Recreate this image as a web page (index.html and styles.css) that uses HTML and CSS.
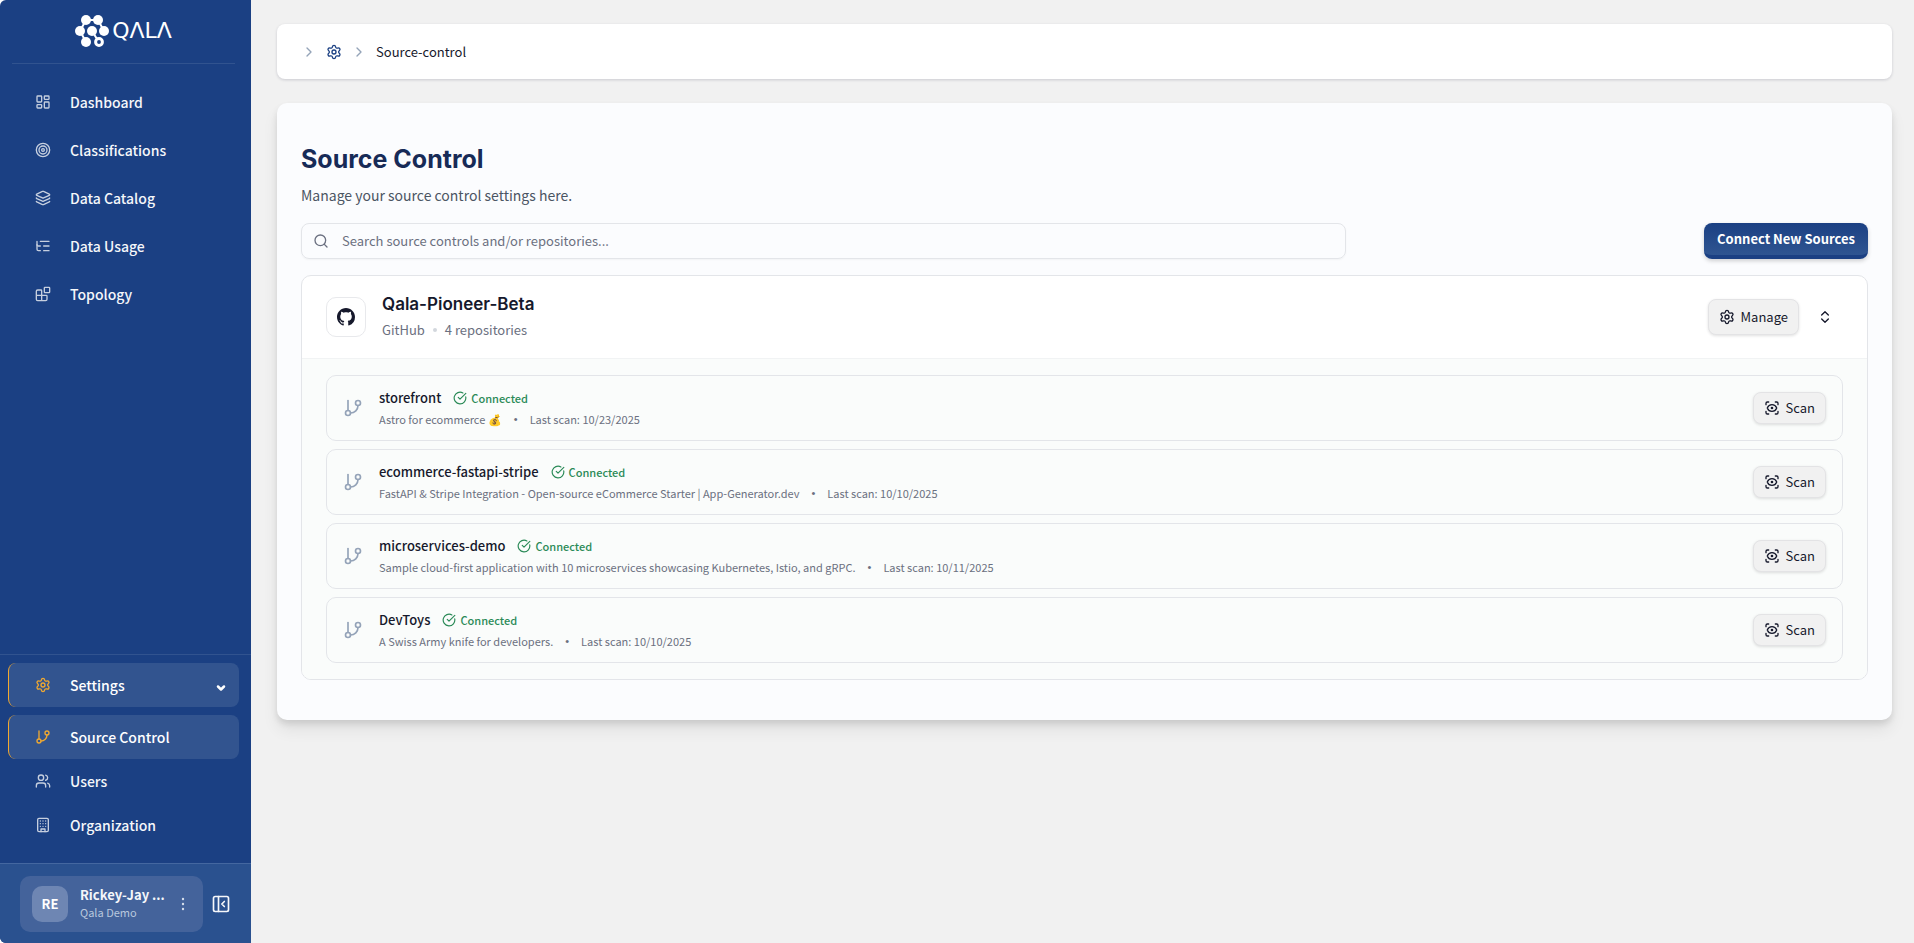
FILE: index.html
```html
<!DOCTYPE html>
<html lang="en">
<head>
  <meta charset="UTF-8">
  <meta name="viewport" content="width=device-width, initial-scale=1">
  <title>Source Control | Qala</title>
  <link rel="stylesheet" href="styles.css">
</head>
<body>
  <!-- Icon sprite -->
  <svg class="sprite" aria-hidden="true">
    <symbol id="i-dashboard" viewBox="0 0 24 24"><rect width="7" height="9" x="3" y="3" rx="1"/><rect width="7" height="5" x="14" y="3" rx="1"/><rect width="7" height="9" x="14" y="12" rx="1"/><rect width="7" height="5" x="3" y="16" rx="1"/></symbol>
    <symbol id="i-target" viewBox="0 0 24 24"><circle cx="12" cy="12" r="10"/><circle cx="12" cy="12" r="6"/><circle cx="12" cy="12" r="2"/></symbol>
    <symbol id="i-layers" viewBox="0 0 24 24"><path d="M12.83 2.18a2 2 0 0 0-1.66 0L2.6 6.08a1 1 0 0 0 0 1.83l8.58 3.91a2 2 0 0 0 1.66 0l8.58-3.9a1 1 0 0 0 0-1.83z"/><path d="M2 12a1 1 0 0 0 .58.91l8.6 3.91a2 2 0 0 0 1.65 0l8.58-3.9A1 1 0 0 0 22 12"/><path d="M2 17a1 1 0 0 0 .58.91l8.6 3.91a2 2 0 0 0 1.65 0l8.58-3.9A1 1 0 0 0 22 17"/></symbol>
    <symbol id="i-tree" viewBox="0 0 24 24"><path d="M21 12h-8"/><path d="M21 5H8"/><path d="M21 19h-8"/><path d="M3 5v5c0 1.1.9 2 2 2h3"/><path d="M3 10v7c0 1.1.9 2 2 2h3"/></symbol>
    <symbol id="i-blocks" viewBox="0 0 24 24"><rect width="8" height="8" x="14" y="2" rx="1"/><path d="M10 22V7a1 1 0 0 0-1-1H4a2 2 0 0 0-2 2v12a2 2 0 0 0 2 2h12a2 2 0 0 0 2-2v-5a1 1 0 0 0-1-1H2"/></symbol>
    <symbol id="i-settings" viewBox="0 0 24 24"><path d="M9.671 4.136a2.34 2.34 0 0 1 4.659 0 2.34 2.34 0 0 0 3.319 1.915 2.34 2.34 0 0 1 2.33 4.033 2.34 2.34 0 0 0 0 3.831 2.34 2.34 0 0 1-2.33 4.033 2.34 2.34 0 0 0-3.319 1.915 2.34 2.34 0 0 1-4.659 0 2.34 2.34 0 0 0-3.32-1.915 2.34 2.34 0 0 1-2.33-4.033 2.34 2.34 0 0 0 0-3.831A2.34 2.34 0 0 1 6.35 6.051a2.34 2.34 0 0 0 3.319-1.915"/><circle cx="12" cy="12" r="3"/></symbol>
    <symbol id="i-branch" viewBox="0 0 24 24"><path d="M6 3v12"/><circle cx="18" cy="6" r="3"/><circle cx="6" cy="18" r="3"/><path d="M18 9a9 9 0 0 1-9 9"/></symbol>
    <symbol id="i-users" viewBox="0 0 24 24"><path d="M16 21v-2a4 4 0 0 0-4-4H6a4 4 0 0 0-4 4v2"/><circle cx="9" cy="7" r="4"/><path d="M22 21v-2a4 4 0 0 0-3-3.87"/><path d="M16 3.13a4 4 0 0 1 0 7.75"/></symbol>
    <symbol id="i-building" viewBox="0 0 24 24"><rect width="16" height="20" x="4" y="2" rx="2"/><path d="M9 22v-4h6v4M8 6h.01M16 6h.01M12 6h.01M12 10h.01M12 14h.01M16 10h.01M16 14h.01M8 10h.01M8 14h.01"/></symbol>
    <symbol id="i-panel" viewBox="0 0 24 24"><rect width="18" height="18" x="3" y="3" rx="2"/><path d="M9 3v18"/><path d="m16 15-3-3 3-3"/></symbol>
    <symbol id="i-right" viewBox="0 0 24 24"><path d="m9 18 6-6-6-6"/></symbol>
    <symbol id="i-down" viewBox="0 0 24 24"><path d="m6 9 6 6 6-6"/></symbol>
    <symbol id="i-updown" viewBox="0 0 24 24"><path d="m7 15 5 5 5-5"/><path d="m7 9 5-5 5 5"/></symbol>
    <symbol id="i-search" viewBox="0 0 24 24"><circle cx="11" cy="11" r="8"/><path d="m21 21-4.3-4.3"/></symbol>
    <symbol id="i-check" viewBox="0 0 24 24"><path d="M21.801 10A10 10 0 1 1 17 3.335"/><path d="m9 11 3 3L22 4"/></symbol>
    <symbol id="i-scan" viewBox="0 0 24 24"><path d="M3 7V5a2 2 0 0 1 2-2h2"/><path d="M17 3h2a2 2 0 0 1 2 2v2"/><path d="M21 17v2a2 2 0 0 1-2 2h-2"/><path d="M7 21H5a2 2 0 0 1-2-2v-2"/><circle cx="12" cy="12" r="1"/><path d="M18.944 12.33a1 1 0 0 0 0-.66 7.5 7.5 0 0 0-13.888 0 1 1 0 0 0 0 .66 7.5 7.5 0 0 0 13.888 0"/></symbol>
    <symbol id="i-github" viewBox="0 0 16 16"><path d="M8 0C3.58 0 0 3.58 0 8c0 3.54 2.29 6.53 5.47 7.59.4.07.55-.17.55-.38 0-.19-.01-.82-.01-1.49-2.01.37-2.53-.49-2.69-.94-.09-.23-.48-.94-.82-1.13-.28-.15-.68-.52-.01-.53.63-.01 1.08.58 1.23.82.72 1.21 1.87.87 2.33.66.07-.52.28-.87.51-1.07-1.78-.2-3.64-.89-3.64-3.95 0-.87.31-1.59.82-2.15-.08-.2-.36-1.02.08-2.12 0 0 .67-.21 2.2.82.64-.18 1.32-.27 2-.27s1.36.09 2 .27c1.53-1.04 2.2-.82 2.2-.82.44 1.1.16 1.92.08 2.12.51.56.82 1.27.82 2.15 0 3.07-1.87 3.75-3.65 3.95.29.25.54.73.54 1.48 0 1.07-.01 1.93-.01 2.2 0 .21.15.46.55.38A8.01 8.01 0 0 0 16 8c0-4.42-3.58-8-8-8z"/></symbol>
  </svg>

  <div class="app">
    <aside class="sidebar">
      <a class="logo" href="#" aria-label="Qala">
        <svg class="logo-mark" viewBox="0 0 34 32">
          <path d="M11 5h12M11 5 5 16M23 5l6 11M5 16l6 11M17 16l5 8"/>
          <g class="dots"><circle cx="11" cy="5" r="5"/><circle cx="23" cy="5" r="5"/><circle cx="5" cy="16" r="5"/><circle cx="17" cy="16" r="5"/><circle cx="29" cy="16" r="5"/><circle cx="11" cy="27" r="5"/></g>
          <circle class="ring" cx="24" cy="27" r="3.4"/>
        </svg>
        <span class="logo-word">QΛLΛ</span>
      </a>

      <nav class="nav">
        <a class="nav-item" href="#"><svg class="icon"><use href="#i-dashboard"/></svg>Dashboard</a>
        <a class="nav-item" href="#"><svg class="icon"><use href="#i-target"/></svg>Classifications</a>
        <a class="nav-item" href="#"><svg class="icon"><use href="#i-layers"/></svg>Data Catalog</a>
        <a class="nav-item" href="#"><svg class="icon"><use href="#i-tree"/></svg>Data Usage</a>
        <a class="nav-item" href="#"><svg class="icon"><use href="#i-blocks"/></svg>Topology</a>
      </nav>

      <nav class="nav-bottom">
        <button class="nav-item active toggle" type="button"><svg class="icon"><use href="#i-settings"/></svg>Settings<svg class="icon caret"><use href="#i-down"/></svg></button>
        <a class="nav-item active" href="#"><svg class="icon"><use href="#i-branch"/></svg>Source Control</a>
        <a class="nav-item" href="#"><svg class="icon"><use href="#i-users"/></svg>Users</a>
        <a class="nav-item" href="#"><svg class="icon"><use href="#i-building"/></svg>Organization</a>
      </nav>

      <div class="account">
        <button class="user" type="button">
          <span class="avatar">RE</span>
          <span class="user-text">
            <span class="user-name">Rickey-Jay ...</span>
            <span class="user-org">Qala Demo</span>
          </span>
          <svg class="more" viewBox="0 0 4 14" aria-hidden="true"><circle cx="2" cy="2" r="1.2"/><circle cx="2" cy="7" r="1.2"/><circle cx="2" cy="12" r="1.2"/></svg>
        </button>
        <button class="collapse" type="button" aria-label="Collapse sidebar"><svg class="icon"><use href="#i-panel"/></svg></button>
      </div>
    </aside>

    <main class="main">
      <nav class="breadcrumb" aria-label="Breadcrumb">
        <svg class="icon sep"><use href="#i-right"/></svg>
        <a class="crumb-home" href="#" aria-label="Settings"><svg class="icon"><use href="#i-settings"/></svg></a>
        <svg class="icon sep"><use href="#i-right"/></svg>
        <span>Source-control</span>
      </nav>

      <section class="panel">
        <h1 class="title">Source Control</h1>
        <p class="subtitle">Manage your source control settings here.</p>

        <div class="toolbar">
          <label class="search">
            <svg class="icon"><use href="#i-search"/></svg>
            <input type="search" aria-label="Search" placeholder="Search source controls and/or repositories...">
          </label>
          <button class="btn-primary" type="button">Connect New Sources</button>
        </div>

        <div class="source">
          <header class="source-head">
            <span class="source-logo"><svg><use href="#i-github"/></svg></span>
            <div class="source-info">
              <h2>Qala-Pioneer-Beta</h2>
              <p>GitHub <i class="dot"></i> 4 repositories</p>
            </div>
            <button class="btn manage" type="button"><svg class="icon"><use href="#i-settings"/></svg>Manage</button>
            <button class="expand" type="button" aria-label="Toggle repositories"><svg class="icon"><use href="#i-updown"/></svg></button>
          </header>

          <ul class="repos">
            <li class="repo">
              <svg class="icon repo-icon"><use href="#i-branch"/></svg>
              <div class="repo-info">
                <div class="repo-top"><h3>storefront</h3><span class="status"><svg class="icon"><use href="#i-check"/></svg>Connected</span></div>
                <p class="meta"><span>Astro for ecommerce 💰</span><span class="bullet">•</span><span>Last scan: 10/23/2025</span></p>
              </div>
              <button class="btn" type="button"><svg class="icon"><use href="#i-scan"/></svg>Scan</button>
            </li>
            <li class="repo">
              <svg class="icon repo-icon"><use href="#i-branch"/></svg>
              <div class="repo-info">
                <div class="repo-top"><h3>ecommerce-fastapi-stripe</h3><span class="status"><svg class="icon"><use href="#i-check"/></svg>Connected</span></div>
                <p class="meta"><span>FastAPI &amp; Stripe Integration - Open-source eCommerce Starter | App-Generator.dev</span><span class="bullet">•</span><span>Last scan: 10/10/2025</span></p>
              </div>
              <button class="btn" type="button"><svg class="icon"><use href="#i-scan"/></svg>Scan</button>
            </li>
            <li class="repo">
              <svg class="icon repo-icon"><use href="#i-branch"/></svg>
              <div class="repo-info">
                <div class="repo-top"><h3>microservices-demo</h3><span class="status"><svg class="icon"><use href="#i-check"/></svg>Connected</span></div>
                <p class="meta"><span>Sample cloud-first application with 10 microservices showcasing Kubernetes, Istio, and gRPC.</span><span class="bullet">•</span><span>Last scan: 10/11/2025</span></p>
              </div>
              <button class="btn" type="button"><svg class="icon"><use href="#i-scan"/></svg>Scan</button>
            </li>
            <li class="repo">
              <svg class="icon repo-icon"><use href="#i-branch"/></svg>
              <div class="repo-info">
                <div class="repo-top"><h3>DevToys</h3><span class="status"><svg class="icon"><use href="#i-check"/></svg>Connected</span></div>
                <p class="meta"><span>A Swiss Army knife for developers.</span><span class="bullet">•</span><span>Last scan: 10/10/2025</span></p>
              </div>
              <button class="btn" type="button"><svg class="icon"><use href="#i-scan"/></svg>Scan</button>
            </li>
          </ul>
        </div>
      </section>
    </main>
  </div>
</body>
</html>
```
FILE: styles.css
```css
* { box-sizing: border-box; }
body { margin: 0; background: #fff; color: #16192c; font: 14px/20px "Noto Sans CJK SC", sans-serif; }
h1, h2, h3, p, ul { margin: 0; padding: 0; }
a { color: inherit; text-decoration: none; }
button { margin: 0; border: 0; background: none; color: inherit; font: inherit; cursor: pointer; }
.sprite { display: none; }
.icon { flex: none; width: 16px; height: 16px; fill: none; stroke: currentColor; stroke-width: 2; stroke-linecap: round; stroke-linejoin: round; }

.app { display: flex; min-height: 100vh; background: #f1f1f1; border-radius: 6px 0 0 6px; overflow: hidden; }

/* Sidebar */
.sidebar { display: flex; flex-direction: column; flex: none; width: 251px; background: #1b4083; color: #f5f7fa; }
.logo { display: flex; align-items: center; justify-content: center; gap: 3px; height: 64px; margin: 0 16px 0 12px; padding-bottom: 2px; border-bottom: 1px solid #31538f; color: #fff; }
.logo-mark { width: 34px; height: 32px; fill: none; stroke: #fff; stroke-width: 2; }
.logo-mark .dots { fill: #fff; stroke: none; }
.logo-mark .ring { stroke-width: 3; }
.logo-word { font: 22px/24px "DejaVu Sans", sans-serif; }
.nav { display: flex; flex-direction: column; gap: 4px; padding: 16px 12px 0 8px; }
.nav-bottom { display: flex; flex-direction: column; margin-top: auto; padding: 8px 12px 16px 8px; border-top: 1px solid #31538f; }
.nav-item { display: flex; align-items: center; gap: 19px; height: 44px; padding: 0 12px 0 26px; border-left: 1px solid transparent; border-radius: 8px; font-weight: 500; text-align: left; }
.nav-item .icon { color: #c6cfdf; }
.nav-item.active { background: #32548f; border-left-color: #f0a830; color: #fff; }
.nav-item.active .icon { color: #f0a830; }
.nav-item.toggle { margin-bottom: 8px; }
.nav-item .caret { width: 12px; height: 12px; margin: 6px 0 0 auto; stroke-width: 5; }
.nav-item.active .caret { color: #fff; }
.account { display: flex; align-items: center; gap: 8px; height: 80px; padding: 0 20px; border-top: 1px solid #4467a0; background: #2a518f; }
.user { display: flex; align-items: center; gap: 12px; width: 183px; height: 56px; padding: 0 18px 0 12px; border-radius: 10px; background: #44639b; text-align: left; }
.avatar { flex: none; width: 36px; height: 36px; border-radius: 10px; background: #6e86b3; color: #fff; font-size: 13px; font-weight: 700; line-height: 36px; text-align: center; }
.user-text { display: flex; flex-direction: column; flex: 1; padding-bottom: 2px; }
.user-name { font-size: 13px; font-weight: 700; line-height: 18px; white-space: nowrap; }
.user-org { color: #b9c8de; font-size: 11px; line-height: 16px; }
.more { flex: none; width: 4px; height: 14px; fill: #d5deeb; }
.collapse { display: flex; padding: 0; }
.collapse .icon { width: 20px; height: 20px; }

/* Main column */
.main { flex: 1; min-width: 0; padding: 24px 22px 24px 26px; }
.breadcrumb { display: flex; align-items: center; gap: 9px; height: 55px; margin-bottom: 24px; padding: 0 24px; border-radius: 8px; background: #fff; box-shadow: 0 1px 3px rgba(25, 30, 60, .18); font-size: 13px; }
.breadcrumb .sep { color: #94a3b8; }
.crumb-home { display: flex; color: #1b4083; }
.panel { padding: 36px 24px 40px; border-radius: 10px; background: #fbfcfe; box-shadow: 0 4px 6px rgba(0, 0, 0, .1), 0 10px 16px rgba(0, 0, 0, .07); }
.title { color: #172b57; font: 700 25px/40px Inter, sans-serif; }
.subtitle { margin-top: 4px; color: #4b5563; line-height: 24px; }
.toolbar { display: flex; align-items: center; justify-content: space-between; margin: 16px 0; }
.search { display: flex; align-items: center; gap: 13px; width: 66.7%; height: 36px; padding: 0 11px; border: 1px solid #e3e5e9; border-radius: 8px; color: #6b7080; box-shadow: 0 1px 2px rgba(0, 0, 0, .04); }
.search input { flex: 1; min-width: 0; padding: 0; border: 0; outline: 0; background: none; color: inherit; font: 13px/20px "Noto Sans CJK SC", sans-serif; }
.search input::placeholder { color: #6b7080; opacity: 1; }
.btn-primary { height: 36px; padding: 0 13px; border-bottom: 4px solid #1b4083; border-radius: 8px; background: linear-gradient(#1b4083, #2f5591); box-shadow: 0 2px 4px rgba(0, 0, 0, .18); color: #fff; font-size: 13px; font-weight: 700; }

/* Source group */
.source { border: 1px solid #e3e5e9; border-radius: 10px; background: #fff; overflow: hidden; }
.source-head { display: flex; align-items: center; height: 83px; padding: 0 24px; border-bottom: 1px solid #f1f3f4; }
.source-logo { display: flex; align-items: center; justify-content: center; width: 40px; height: 40px; margin-right: 16px; border: 1px solid #e8e9ec; border-radius: 10px; }
.source-logo svg { width: 18px; height: 18px; fill: #16192c; }
.source-info { flex: 1; padding-bottom: 2px; }
.source-info h2 { font: 600 17px/28px Inter, sans-serif; }
.source-info p { display: flex; align-items: center; gap: 8px; color: #6b7080; font-size: 13px; line-height: 24px; }
.dot { width: 4px; height: 4px; border-radius: 50%; background: #d3d7dd; }
.btn { display: flex; align-items: center; gap: 6px; height: 32px; padding: 0 10px; border: 1px solid #e3e3e5; border-radius: 8px; background: #f1f1f1; box-shadow: 0 1px 3px rgba(0, 0, 0, .12); font-size: 13px; }
.manage { height: 36px; }
.expand { display: flex; margin: 0 10px 0 18px; padding: 0; }
.repos { display: flex; flex-direction: column; gap: 8px; padding: 16px 24px; background: #fafcfb; list-style: none; }
.repo { display: flex; align-items: center; height: 66px; padding: 0 16px; border: 1px solid #e3e5e9; border-radius: 10px; }
.repo-icon { width: 20px; height: 20px; margin-right: 16px; color: #94a3b8; }
.repo-info { flex: 1; min-width: 0; }
.repo-top { display: flex; align-items: center; gap: 12px; }
.repo h3 { font-size: 13px; font-weight: 500; line-height: 22px; }
.status { display: flex; align-items: center; gap: 4px; color: #2a8a57; font-size: 11px; font-weight: 500; }
.status .icon { width: 14px; height: 14px; }
.meta { display: flex; gap: 12px; color: #6b7080; font-size: 11px; }
.bullet { font-family: "Liberation Sans", sans-serif; }
```
